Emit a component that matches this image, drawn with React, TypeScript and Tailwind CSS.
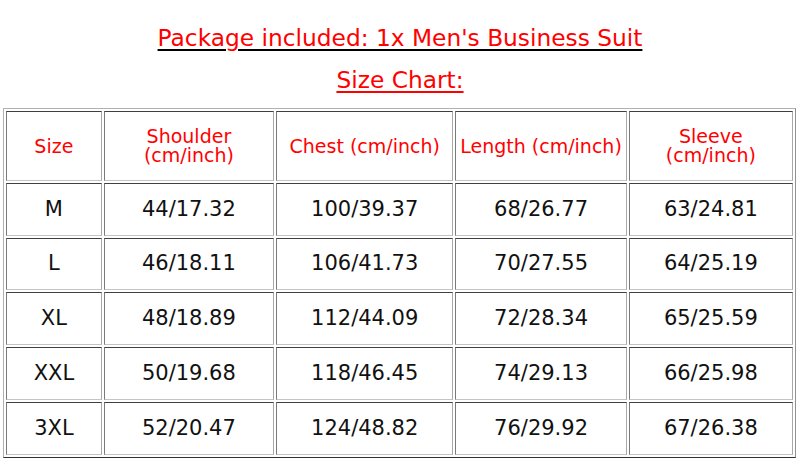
import React from "react";

const rows = [
  { h: "h-[53px]", v: ["M", "44/17.32", "100/39.37", "68/26.77", "63/24.81"] },
  { h: "h-[52px]", v: ["L", "46/18.11", "106/41.73", "70/27.55", "64/25.19"] },
  { h: "h-[53px]", v: ["XL", "48/18.89", "112/44.09", "72/28.34", "65/25.59"] },
  { h: "h-[53px]", v: ["XXL", "50/19.68", "118/46.45", "74/29.13", "66/25.98"] },
  { h: "h-[53px]", v: ["3XL", "52/20.47", "124/48.82", "76/29.92", "67/26.38"] },
];

const cell =
  "border border-t-[#404040] border-l-[#7a7a7a] border-b-[#c4c4c4] border-r-[#a8a8a8] text-center align-middle p-0";

export default function App() {
  return (
    <div className="w-[800px] h-[472px] bg-white font-['DejaVu_Sans',Verdana,sans-serif] overflow-hidden">
      <div className="pt-[24px] flex flex-col items-center gap-[14px] text-[23.3px] leading-[28px]">
        <p className="underline decoration-black decoration-2 underline-offset-[3px]">
          <span className="text-[#ff0000]">Package included: 1x Men's Business Suit</span>
        </p>
        <p className="text-[#ff0000] underline decoration-2 underline-offset-[3px]">Size Chart:</p>
      </div>

      <table className="mt-[14px] ml-[3px] w-[793px] table-fixed border-separate border-spacing-[2px] border border-t-[#b0b0b0] border-l-[#b0b0b0] border-b-[#303030] border-r-[#909090]">
        <colgroup>
          <col className="w-[95px]" />
          <col className="w-[169px]" />
          <col className="w-[176px]" />
          <col className="w-[170px]" />
          <col className="w-[163px]" />
        </colgroup>
        <thead>
          <tr className="h-[70px] text-[19px] leading-[19px] text-[#ff0000]">
            <th className={`${cell} font-normal`}>Size</th>
            <th className={`${cell} font-normal`}>
              Shoulder
              <br />
              (cm/inch)
            </th>
            <th className={`${cell} font-normal`}>Chest (cm/inch)</th>
            <th className={`${cell} font-normal whitespace-nowrap`}>Length (cm/inch)</th>
            <th className={`${cell} font-normal`}>
              Sleeve
              <br />
              (cm/inch)
            </th>
          </tr>
        </thead>
        <tbody>
          {rows.map((r) => (
            <tr key={r.v[0]} className={`${r.h} text-[21px] text-[#111]`}>
              {r.v.map((v, i) => (
                <td key={i} className={cell}>
                  {v}
                </td>
              ))}
            </tr>
          ))}
        </tbody>
      </table>
    </div>
  );
}
